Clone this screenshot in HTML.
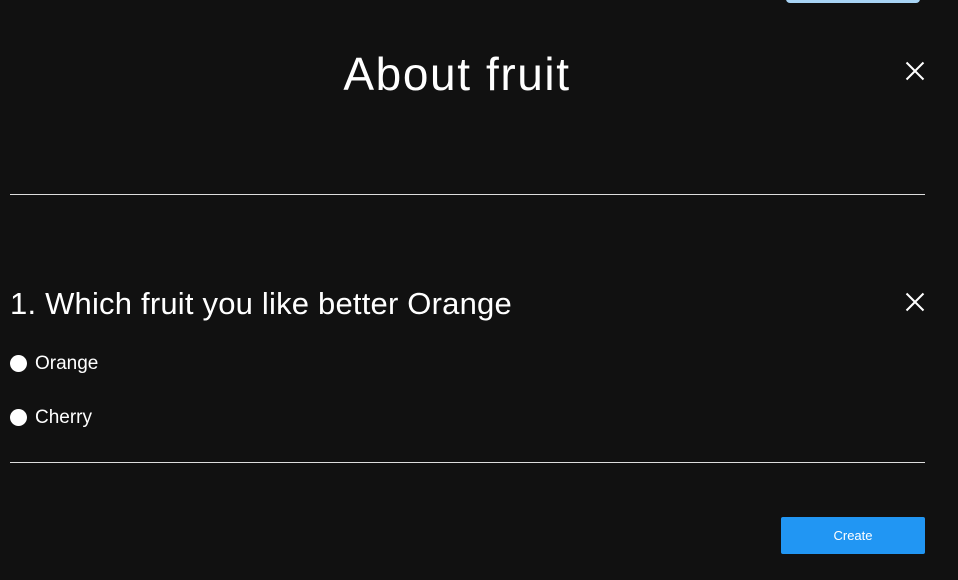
<!DOCTYPE html>
<html><head><style>
html,body{margin:0;padding:0;background:#111;width:958px;height:580px;overflow:hidden;font-family:"Liberation Sans",sans-serif;color:#fff;position:relative}
.a{position:absolute}
.x{position:absolute;width:20px;height:20px}
.x:before,.x:after{content:"";position:absolute;left:-2px;top:9px;width:24px;height:2px;background:#fff;transform:rotate(45deg)}
.x:after{transform:rotate(-45deg)}
.hr{position:absolute;left:10px;width:915px;height:1px;background:#ddd}
.r{position:absolute;left:10px;width:17px;height:17px;border-radius:50%;background:#fff}
</style></head><body>
<div class="a" style="left:786px;top:-6px;width:134px;height:9px;background:#a8d4f5;border-radius:4px"></div>
<div class="a" style="left:0;width:914px;top:46px;text-align:center;font-size:46px;letter-spacing:1.6px;line-height:56px">About fruit</div>
<div class="x" style="left:905px;top:61px"></div>
<div class="hr" style="top:194px"></div>
<div class="a" style="left:10px;top:285px;font-size:31px;letter-spacing:0.2px;line-height:38px">1. Which fruit you like better Orange</div>
<div class="x" style="left:905px;top:292px"></div>
<div class="r" style="top:355px"></div>
<div class="a" style="left:35px;top:353px;font-size:19px;line-height:22px">Orange</div>
<div class="r" style="top:409px"></div>
<div class="a" style="left:35px;top:407px;font-size:19px;line-height:22px">Cherry</div>
<div class="hr" style="top:462px"></div>
<div class="a" style="left:781px;top:517px;width:144px;height:37px;background:#2196f3;border-radius:2px;font-size:13px;line-height:37px;text-align:center">Create</div>
</body></html>
